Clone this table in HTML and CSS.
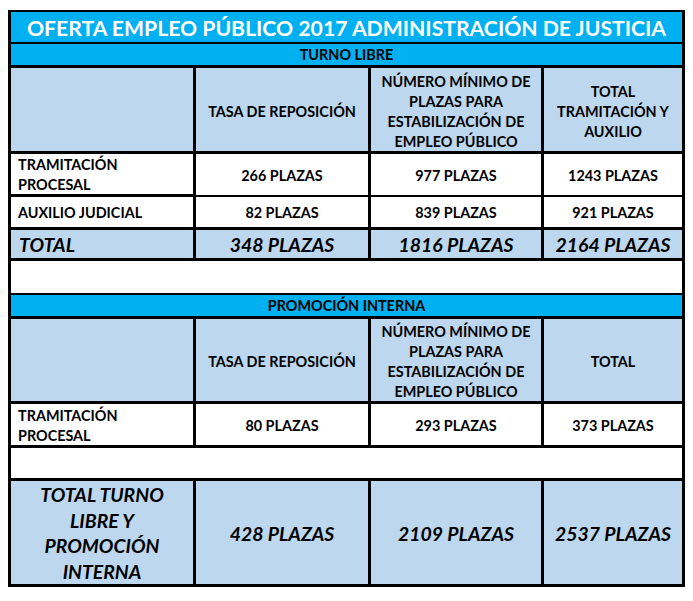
FILE: index.html
```html
<!DOCTYPE html>
<html lang="es">
<head>
<meta charset="utf-8">
<title>Oferta Empleo Público 2017 Administración de Justicia</title>
<link rel="stylesheet" href="styles.css">
</head>
<body>
<div class="sheet">
  <div class="cell title span4">OFERTA EMPLEO PÚBLICO 2017 ADMINISTRACIÓN DE JUSTICIA</div>
  <div class="cell section span4">TURNO LIBRE</div>

  <div class="cell head"></div>
  <div class="cell head">TASA DE REPOSICIÓN</div>
  <div class="cell head">NÚMERO MÍNIMO DE<br>PLAZAS PARA<br>ESTABILIZACIÓN DE<br>EMPLEO PÚBLICO</div>
  <div class="cell head">TOTAL<br>TRAMITACIÓN Y<br>AUXILIO</div>

  <div class="cell label">TRAMITACIÓN<br>PROCESAL</div>
  <div class="cell thin-below">266 PLAZAS</div>
  <div class="cell thin-below">977 PLAZAS</div>
  <div class="cell thin-below">1243 PLAZAS</div>

  <div class="cell label">AUXILIO JUDICIAL</div>
  <div class="cell">82 PLAZAS</div>
  <div class="cell">839 PLAZAS</div>
  <div class="cell">921 PLAZAS</div>

  <div class="cell total label">TOTAL</div>
  <div class="cell total">348 PLAZAS</div>
  <div class="cell total">1816 PLAZAS</div>
  <div class="cell total">2164 PLAZAS</div>

  <div class="cell span4"></div>

  <div class="cell section span4">PROMOCIÓN INTERNA</div>

  <div class="cell head"></div>
  <div class="cell head">TASA DE REPOSICIÓN</div>
  <div class="cell head">NÚMERO MÍNIMO DE<br>PLAZAS PARA<br>ESTABILIZACIÓN DE<br>EMPLEO PÚBLICO</div>
  <div class="cell head">TOTAL</div>

  <div class="cell label">TRAMITACIÓN<br>PROCESAL</div>
  <div class="cell">80 PLAZAS</div>
  <div class="cell">293 PLAZAS</div>
  <div class="cell">373 PLAZAS</div>

  <div class="cell span4"></div>

  <div class="cell total grand">TOTAL TURNO<br>LIBRE Y<br>PROMOCIÓN<br>INTERNA</div>
  <div class="cell total">428 PLAZAS</div>
  <div class="cell total">2109 PLAZAS</div>
  <div class="cell total">2537 PLAZAS</div>
</div>
</body>
</html>
```

FILE: styles.css
```css
html, body {
  background: #ffffff;
}

body {
  margin: 10px 8px;
  font-family: "Lato", "Open Sans", sans-serif;
  color: #000000;
}

.sheet {
  display: grid;
  width: max-content;
  grid-template-columns: 182px 172px 170px 138px;
  grid-template-rows: 30px 20px 83px 40px 30px 28px 32px 20px 82px 41px 30px 103px;
  gap: 3px;
  padding: 2px 3px 3px;
  background: #000000;
}

.cell {
  display: flex;
  align-items: center;
  justify-content: center;
  text-align: center;
  background: #ffffff;
  font-weight: 700;
  font-size: 14.4px;
  line-height: 20px;
  padding-top: 2px;
  overflow: hidden;
  white-space: nowrap;
}

.span4 {
  grid-column: 1 / span 4;
}

.title {
  background: #00b0f0;
  color: #ffffff;
  font-size: 21.2px;
  line-height: 30px;
  padding-top: 1px;
}

.section {
  background: #00b0f0;
  margin-top: -1px;
  padding-top: 1px;
}

.head {
  background: #bdd7ee;
  padding-top: 4px;
}

.label {
  justify-content: flex-start;
  text-align: left;
  padding-left: 7px;
}

.thin-below {
  margin-bottom: -1px;
}

.total {
  background: #bdd7ee;
  font-style: italic;
  font-size: 19.4px;
}

.total.label {
  padding-left: 8px;
}

.grand {
  line-height: 25.5px;
  padding-top: 1px;
}
```
